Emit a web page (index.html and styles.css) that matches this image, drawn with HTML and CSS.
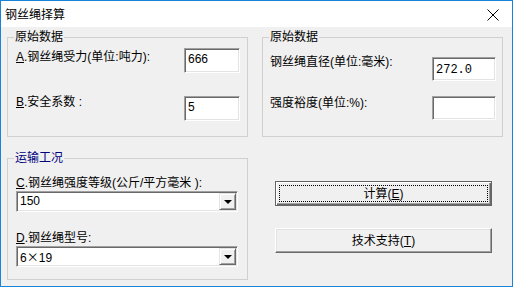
FILE: index.html
```html
<!DOCTYPE html>
<html lang="zh">
<head>
  <meta charset="UTF-8">
  <title>钢丝绳择算</title>
  <link rel="stylesheet" href="styles.css">
</head>
<body>
  <div class="window">
    <!-- Barra de título -->
    <div class="titlebar">
      <span class="title">钢丝绳择算</span>
      <svg class="close" width="12" height="12" viewBox="0 0 12 12">
        <path d="M0.5 0.5 L11.5 11.5 M11.5 0.5 L0.5 11.5" stroke="#000" stroke-width="1" fill="none"/>
      </svg>
    </div>

    <div class="client">
      <!-- Datos originales -->
      <fieldset class="group group-a">
        <legend>原始数据</legend>
        <div class="rows">
          <label class="lbl l1"><u>A</u>.钢丝绳受力(单位:吨力):</label>
          <div class="edit">666</div>
          <label class="lbl l2"><u>B</u>.安全系数 :</label>
          <div class="edit">5</div>
        </div>
      </fieldset>

      <fieldset class="group group-b">
        <legend>原始数据</legend>
        <div class="rows">
          <label class="lbl l1">钢丝绳直径(单位:毫米):</label>
          <div class="edit mono">272.0</div>
          <label class="lbl l2">强度裕度(单位:%):</label>
          <div class="edit"></div>
        </div>
      </fieldset>

      <!-- Condiciones de transporte -->
      <fieldset class="group group-c">
        <legend class="blue">运输工况</legend>
        <div class="stack">
          <label class="lbl lc"><u>C</u>.钢丝绳强度等级(公斤/平方毫米 ):</label>
          <div class="combo">
            <span class="combo-text">150</span>
            <span class="combo-btn"><i class="arrow"></i></span>
          </div>
          <label class="lbl ld"><u>D</u>.钢丝绳型号:</label>
          <div class="combo">
            <span class="combo-text">6<span class="wide">×</span>19</span>
            <span class="combo-btn"><i class="arrow"></i></span>
          </div>
        </div>
      </fieldset>

      <div class="actions">
        <button class="btn default"><span class="focus">计算(<u>E</u>)</span></button>
        <button class="btn">技术支持(<u>T</u>)</button>
      </div>
    </div>
  </div>
</body>
</html>
```

FILE: styles.css
```css
/* RESET */
* {
  margin: 0;
  padding: 0;
  box-sizing: border-box;
}

body {
  background: #fff;
  font-family: "Liberation Sans", "Noto Sans CJK SC", sans-serif;
  font-size: 12px;
  color: #000;
}

/* VENTANA */
.window {
  width: 513px;
  height: 287px;
  border: 1px solid #1883d7;
  background: #f0f0f0;
  display: flex;
  flex-direction: column;
}

.titlebar {
  height: 26px;
  background: #fff;
  display: flex;
  align-items: center;
  justify-content: space-between;
  padding: 1px 13px 0 4px;
}

.title {
  font-size: 12px;
  line-height: 16px;
}

.close {
  display: block;
}

/* ÁREA CLIENTE */
.client {
  display: grid;
  grid-template-columns: 241px 241px;
  grid-template-rows: 108px 130px;
  column-gap: 14px;
  row-gap: 13px;
  padding: 2px 0 0 6px;
}

/* GRUPOS */
.group {
  border: 1px solid #d0d0d0;
  min-width: 0;
  padding: 0;
  margin: 0;
}

.group legend {
  margin-left: 6px;
  padding: 0 1px;
  line-height: 16px;
  font-size: 12px;
}

.group legend.blue {
  color: #00007f;
}

.lbl {
  line-height: 16px;
  white-space: nowrap;
}

.group-a .rows {
  display: grid;
  grid-template-columns: 1fr 56px;
  grid-template-rows: 25px 25px;
  row-gap: 23px;
  padding: 3px 7px 0 8px;
}

.group-a .l1 { margin-top: 1px; }
.group-a .l2 { margin-top: -2px; }

.group-b .rows {
  display: grid;
  grid-template-columns: 1fr 64px;
  grid-template-rows: 24px 24px;
  row-gap: 15px;
  padding: 12px 6px 0 7px;
}

.group-b .l1 { margin-top: -3px; }
.group-b .l2 { margin-top: -1px; }

/* CAMPO DE TEXTO (hundido) */
.edit {
  background: #fff;
  border-top: 1px solid #a0a0a0;
  border-left: 1px solid #a0a0a0;
  border-right: 1px solid #fff;
  border-bottom: 1px solid #fff;
  box-shadow: inset 1px 1px 0 #696969, inset -1px -1px 0 #e3e3e3;
  padding: 2px 3px;
  line-height: 16px;
  font-size: 12px;
}

.edit.mono {
  font-family: "Liberation Mono", monospace;
  padding-top: 4px;
}

/* COMBOS */
.group-c .stack {
  display: flex;
  flex-direction: column;
  padding: 9px 9px 0 8px;
}

.group-c .ld { margin-top: 18px; }

.combo {
  height: 21px;
  display: flex;
  background: #fff;
  border-top: 1px solid #a0a0a0;
  border-left: 1px solid #a0a0a0;
  border-right: 1px solid #fff;
  border-bottom: 1px solid #fff;
  box-shadow: inset 1px 1px 0 #696969, inset -1px -1px 0 #e3e3e3;
  padding: 1px;
}

.combo-text {
  flex: 1;
  padding-left: 2px;
  line-height: 17px;
  font-size: 12px;
}

.combo-text .wide {
  font-family: "Noto Sans CJK SC", sans-serif;
}

.combo-btn {
  width: 17px;
  background: #f0f0f0;
  border-top: 1px solid #e3e3e3;
  border-left: 1px solid #e3e3e3;
  border-right: 1px solid #696969;
  border-bottom: 1px solid #696969;
  box-shadow: inset 1px 1px 0 #fff, inset -1px -1px 0 #a0a0a0;
  display: flex;
  align-items: center;
  justify-content: center;
}

.arrow {
  width: 0;
  height: 0;
  border-left: 4px solid transparent;
  border-right: 4px solid transparent;
  border-top: 4px solid #000;
  margin-top: 1px;
}

/* BOTONES */
.actions {
  display: flex;
  flex-direction: column;
  gap: 22px;
  padding: 31px 0 0 13px;
}

.btn {
  width: 217px;
  height: 25px;
  background: #f0f0f0;
  border-top: 1px solid #fff;
  border-left: 1px solid #fff;
  border-right: 1px solid #696969;
  border-bottom: 1px solid #696969;
  box-shadow: inset -1px -1px 0 #a0a0a0, inset 1px 1px 0 #e3e3e3;
  font-family: "Liberation Sans", "Noto Sans CJK SC", sans-serif;
  font-size: 12px;
  line-height: 16px;
  color: #000;
  display: flex;
  align-items: center;
  justify-content: center;
}

.btn.default {
  border: 1px solid #646464;
  box-shadow: inset 1px 1px 0 #fff, inset -1px -1px 0 #696969, inset -2px -2px 0 #a0a0a0;
  padding: 3px;
}

.btn .focus {
  flex: 1;
  align-self: stretch;
  border: 1px dotted #000;
  display: flex;
  align-items: center;
  justify-content: center;
}
```
